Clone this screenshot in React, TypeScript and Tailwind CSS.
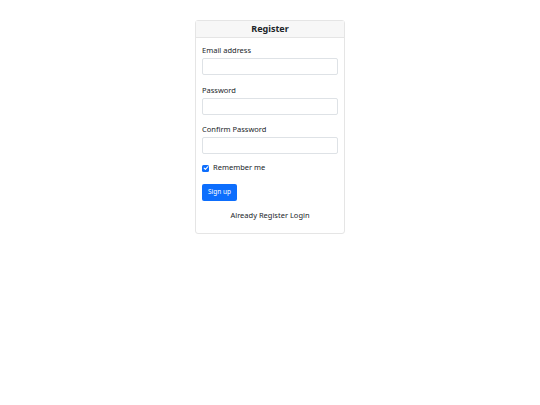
export default function App() {
  return (
    <div className="min-h-[405px] w-full bg-white pt-5 font-['Noto_Sans',sans-serif] text-[#212529]">
      <div className="mx-auto w-[150px] rounded-[3px] border border-[#e5e5e5] bg-white">
        <div className="flex h-[17px] items-center justify-center border-b border-[#e5e5e5] bg-[#f7f7f7] text-[9px] font-bold">
          Register
        </div>
        <form className="px-[6px] pt-[7px] pb-[13px]" onSubmit={(e) => e.preventDefault()}>
          <Field label="Email address" type="email" />
          <Field label="Password" type="password" />
          <Field label="Confirm Password" type="password" />
          <label className="flex h-[9px] items-center gap-[4px] text-[7.5px] leading-none">
            <span className="flex h-[7px] w-[7px] items-center justify-center rounded-[1.5px] bg-[#0d6efd]">
              <svg viewBox="0 0 8 8" className="h-[6px] w-[6px]" fill="none" stroke="white" strokeWidth="1.4" strokeLinecap="round" strokeLinejoin="round">
                <path d="M1.5 4.2l1.7 1.7L6.5 2.3" />
              </svg>
            </span>
            Remember me
          </label>
          <button
            type="submit"
            className="mt-[11px] flex h-[17px] w-[35px] items-center justify-center rounded-[2px] bg-[#0d6efd] text-[6.5px] text-white"
          >
            Sign up
          </button>
          <p className="mt-[9px] text-center text-[7.5px] leading-[10px]">Already Register Login</p>
        </form>
      </div>
    </div>
  );
}

function Field({ label, type }: { label: string; type: string }) {
  return (
    <div className="mb-[9.5px]">
      <div className="h-[10px] text-[7.5px] leading-[10px]">{label}</div>
      <input
        type={type}
        className="mt-[3px] block h-[17px] w-full rounded-[2px] border border-[#dee2e6] bg-white outline-none"
      />
    </div>
  );
}
